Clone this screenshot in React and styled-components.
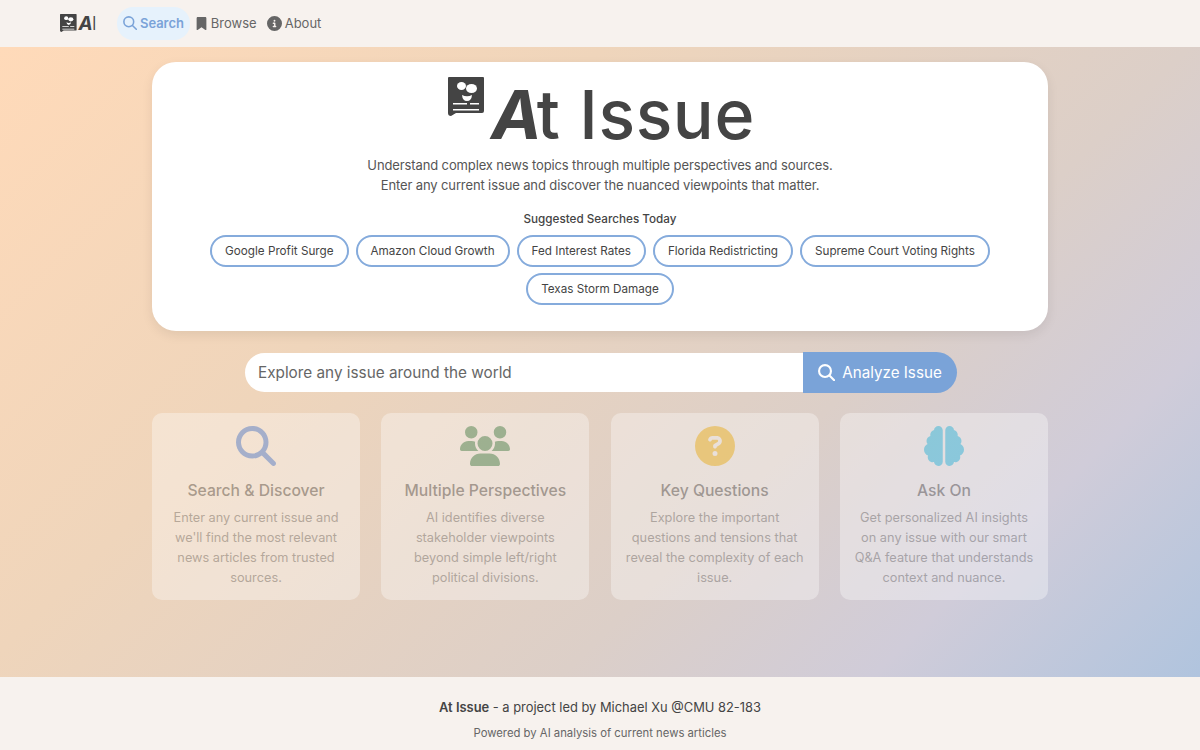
import React, { useState } from "react";
import styled, { createGlobalStyle } from "styled-components";
import {
	FaBookmark,
	FaCircleInfo,
	FaCircleQuestion,
	FaBrain,
	FaUsers,
	FaMagnifyingGlass,
} from "react-icons/fa6";

const GlobalStyle = createGlobalStyle`
	* {
		box-sizing: border-box;
	}
	html, body {
		margin: 0;
		padding: 0;
	}
	body {
		font-family: "Inter", "Liberation Sans", sans-serif;
		color: #444;
	}
`;

const Page = styled.div`
	min-height: 750px;
	display: flex;
	flex-direction: column;
`;

// Top navigation
const NavBar = styled.nav`
	height: 47px;
	background: #f7f2ee;
	display: flex;
	align-items: center;
	padding: 0 0 1px 60px;
`;

const Brand = styled.div`
	display: flex;
	align-items: center;
	gap: 2px;
	width: 57px;
	color: #444;
`;

const BrandText = styled.span`
	font-size: 19px;
	line-height: 1;
	font-weight: 300;
	letter-spacing: -1px;

	b {
		font-weight: 700;
		font-style: italic;
	}
`;

const NavLinks = styled.div`
	display: flex;
	align-items: center;
`;

const NavLink = styled.a`
	display: flex;
	align-items: center;
	gap: 3px;
	height: 33px;
	padding: ${(p) => (p.$active ? "0 6px" : "0 5px")};
	border-radius: 16px;
	font-size: 13px;
	letter-spacing: ${(p) => (p.$active ? "-0.05px" : "0")};
	color: ${(p) => (p.$active ? "#7aa3d8" : "#666")};
	font-weight: ${(p) => (p.$active ? 600 : 400)};
	background: ${(p) => (p.$active ? "#e6f2fc" : "transparent")};
`;

// Main area with the gradient
const Main = styled.main`
	flex: 1;
	background: linear-gradient(
		135deg,
		#ffdab9 0%,
		#efd5bb 33%,
		#dccfc8 65%,
		#d0ccd9 82%,
		#b0c4de 100%
	);
	padding-top: 15px;
	display: flex;
	flex-direction: column;
	align-items: center;
`;

const Hero = styled.section`
	width: 896px;
	height: 269px;
	background: #fff;
	border-radius: 24px;
	box-shadow: 0 4px 12px rgba(0, 0, 0, 0.08);
	display: flex;
	flex-direction: column;
	align-items: center;
	padding-top: 12px;
`;

const TitleRow = styled.div`
	display: flex;
	align-items: flex-start;
	height: 80px;
	gap: 7px;
	margin-left: 3px;
`;

const LogoBox = styled.div`
	margin-top: 3px;
	color: #444;
`;

const Title = styled.h1`
	margin: 0;
	font-size: 68px;
	line-height: 80px;
	font-weight: 500;
	color: #444;
	letter-spacing: 0.6px;
`;

const TitleA = styled.span`
	font-weight: 700;
	font-style: italic;
	letter-spacing: -5px;
`;

const Tagline = styled.p`
	margin: 1px 0 0;
	font-size: 13px;
	line-height: 20px;
	letter-spacing: -0.12px;
	color: #555;
	text-align: center;
`;

const SuggestLabel = styled.div`
	margin-top: 16px;
	font-size: 11.7px;
	line-height: 16px;
	font-weight: 500;
	color: #444;
`;

const ChipRow = styled.div`
	margin-top: 8px;
	display: flex;
	flex-wrap: wrap;
	justify-content: center;
	gap: 6px 7px;
	width: 800px;
`;

const Chip = styled.button`
	height: 32px;
	padding: 0 13px;
	background: #fff;
	border: 2px solid #85abdc;
	border-radius: 16px;
	font-family: inherit;
	font-size: 11.7px;
	color: #444;
	cursor: pointer;
`;

const SearchForm = styled.form`
	margin: 21px 0 0 2px;
	width: 712px;
	height: 41px;
	display: flex;
`;

const SearchInput = styled.input`
	flex: 1;
	min-width: 0;
	height: 39px;
	margin-top: 1px;
	padding: 0 13px;
	border: none;
	outline: none;
	border-radius: 20px 0 0 20px;
	font-family: inherit;
	font-size: 15.3px;
	color: #444;
	background: #fff;

	&::placeholder {
		color: #666;
		opacity: 1;
	}
`;

const SearchButton = styled.button`
	width: 154px;
	display: flex;
	align-items: center;
	justify-content: center;
	gap: 7px;
	background: #7aa3d8;
	color: #fff;
	border: none;
	border-radius: 0 21px 21px 0;
	font-family: inherit;
	font-size: 15.2px;
	cursor: pointer;
`;

const Features = styled.section`
	margin-top: 20px;
	width: 896px;
	display: grid;
	grid-template-columns: repeat(4, 1fr);
	gap: 21.33px;
`;

const Card = styled.article`
	height: 187px;
	padding: 13px 12px 0;
	background: rgba(255, 255, 255, 0.85);
	border-radius: 10px;
	text-align: center;
	opacity: 0.4;
	display: flex;
	flex-direction: column;
	align-items: center;
`;

const CardIcon = styled.div`
	height: 40px;
	display: flex;
	align-items: center;
	justify-content: center;
	color: ${(p) => p.$color};
`;

const CardTitle = styled.h3`
	margin: 13px 0 0;
	font-size: 15.7px;
	line-height: 24px;
	font-weight: 500;
	color: #444;
`;

const CardText = styled.p`
	margin: 4.5px 0 0;
	font-size: 12.75px;
	line-height: 20px;
	color: #666;
`;

const Footer = styled.footer`
	height: 73px;
	background: #f7f2ee;
	text-align: center;
	padding-top: 21px;
`;

const FooterMain = styled.div`
	font-size: 12.9px;
	line-height: 20px;
	color: #444;

	strong {
		font-weight: 600;
	}
`;

const FooterSub = styled.div`
	margin-top: 7px;
	font-size: 11.3px;
	line-height: 16px;
	color: #666;
`;

// Small newspaper face used as the logo
const LogoMark = ({ size }) => (
	<svg height={size} width={(size * 36) / 39} viewBox="0 0 36 39">
		<path
			d="M1 0h34a1 1 0 0 1 1 1v33a2 2 0 0 1-2 2H8l-5 3a3 3 0 0 1-3-3V1a1 1 0 0 1 1-1z"
			fill="currentColor"
		/>
		<ellipse cx="13.500" cy="9" rx="4.500" ry="4" fill="#fff" />
		<ellipse cx="23.500" cy="11.500" rx="5.500" ry="4.500" fill="#fff" />
		<path d="M14 18q5 2.500 10 0q-.5 6-5 6t-5-6z" fill="#fff" />
		<path d="M5 26h14v1.500H5zM22 26h9v1.500H22zM5 32h26v1.500H5z" fill="#fff" />
	</svg>
);

const SearchGlyph = ({ size, weight }) => (
	<svg
		width={size}
		height={size}
		viewBox="0 0 40 40"
		fill="none"
		stroke="currentColor"
		strokeWidth={weight}
		strokeLinecap="round"
	>
		<circle cx="16.500" cy="16.500" r="14" />
		<line x1="27" y1="27" x2="38" y2="38" />
	</svg>
);

const suggestions = [
	"Google Profit Surge",
	"Amazon Cloud Growth",
	"Fed Interest Rates",
	"Florida Redistricting",
	"Supreme Court Voting Rights",
	"Texas Storm Damage",
];

const features = [
	{
		title: "Search & Discover",
		text: "Enter any current issue and we'll find the most relevant news articles from trusted sources.",
		color: "#3a78e0",
		icon: <FaMagnifyingGlass size={40} />,
	},
	{
		title: "Multiple Perspectives",
		text: "AI identifies diverse stakeholder viewpoints beyond simple left/right political divisions.",
		color: "#327f48",
		icon: <FaUsers size={50} />,
	},
	{
		title: "Key Questions",
		text: "Explore the important questions and tensions that reveal the complexity of each issue.",
		color: "#f7b90f",
		icon: <FaCircleQuestion size={40} />,
	},
	{
		title: "Ask On",
		text: "Get personalized AI insights on any issue with our smart Q&A feature that understands context and nuance.",
		color: "#1cc0ea",
		icon: <FaBrain size={40} />,
	},
];

const App = () => {
	const [query, setQuery] = useState("");

	return (
		<Page>
			<GlobalStyle />
			<NavBar>
				<Brand>
					<LogoMark size={18} />
					<BrandText>
						<b>A</b>I
					</BrandText>
				</Brand>
				<NavLinks>
					<NavLink $active>
						<SearchGlyph size={14} weight={4.5} />
						Search
					</NavLink>
					<NavLink>
						<FaBookmark size={13} />
						Browse
					</NavLink>
					<NavLink>
						<FaCircleInfo size={15} />
						About
					</NavLink>
				</NavLinks>
			</NavBar>
			<Main>
				<Hero>
					<TitleRow>
						<LogoBox>
							<LogoMark size={39} />
						</LogoBox>
						<Title>
							<TitleA>A</TitleA>t Issue
						</Title>
					</TitleRow>
					<Tagline>
						Understand complex news topics through multiple perspectives and sources.
						<br />
						Enter any current issue and discover the nuanced viewpoints that matter.
					</Tagline>
					<SuggestLabel>Suggested Searches Today</SuggestLabel>
					<ChipRow>
						{suggestions.map((s) => (
							<Chip key={s} type="button">
								{s}
							</Chip>
						))}
					</ChipRow>
				</Hero>
				<SearchForm onSubmit={(e) => e.preventDefault()}>
					<SearchInput
						type="text"
						placeholder="Explore any issue around the world"
						value={query}
						onChange={(e) => setQuery(e.target.value)}
					/>
					<SearchButton type="submit">
						<SearchGlyph size={17} weight={5} />
						Analyze Issue
					</SearchButton>
				</SearchForm>
				<Features>
					{features.map((f) => (
						<Card key={f.title}>
							<CardIcon $color={f.color}>{f.icon}</CardIcon>
							<CardTitle>{f.title}</CardTitle>
							<CardText>{f.text}</CardText>
						</Card>
					))}
				</Features>
			</Main>
			<Footer>
				<FooterMain>
					<strong>At Issue</strong> - a project led by Michael Xu @CMU 82-183
				</FooterMain>
				<FooterSub>Powered by AI analysis of current news articles</FooterSub>
			</Footer>
		</Page>
	);
};

export default App;
